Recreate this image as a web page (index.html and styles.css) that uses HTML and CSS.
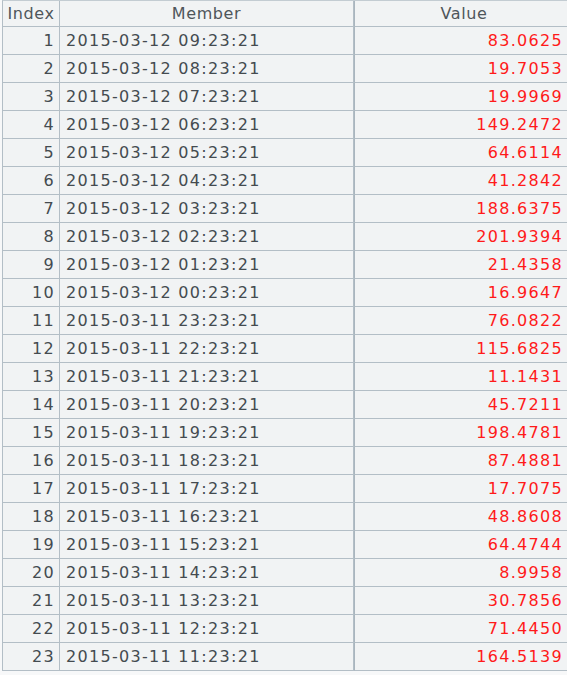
FILE: index.html
```html
<!DOCTYPE html>
<html>
<head>
<meta charset="utf-8">
<link rel="stylesheet" href="styles.css">
</head>
<body>
<div class="grid">
  <div class="cell head">Index</div>
  <div class="cell head">Member</div>
  <div class="cell head val-head">Value</div>

  <div class="cell idx">1</div><div class="cell mem">2015-03-12 09:23:21</div><div class="cell val">83.0625</div>
  <div class="cell idx">2</div><div class="cell mem">2015-03-12 08:23:21</div><div class="cell val">19.7053</div>
  <div class="cell idx">3</div><div class="cell mem">2015-03-12 07:23:21</div><div class="cell val">19.9969</div>
  <div class="cell idx">4</div><div class="cell mem">2015-03-12 06:23:21</div><div class="cell val">149.2472</div>
  <div class="cell idx">5</div><div class="cell mem">2015-03-12 05:23:21</div><div class="cell val">64.6114</div>
  <div class="cell idx">6</div><div class="cell mem">2015-03-12 04:23:21</div><div class="cell val">41.2842</div>
  <div class="cell idx">7</div><div class="cell mem">2015-03-12 03:23:21</div><div class="cell val">188.6375</div>
  <div class="cell idx">8</div><div class="cell mem">2015-03-12 02:23:21</div><div class="cell val">201.9394</div>
  <div class="cell idx">9</div><div class="cell mem">2015-03-12 01:23:21</div><div class="cell val">21.4358</div>
  <div class="cell idx">10</div><div class="cell mem">2015-03-12 00:23:21</div><div class="cell val">16.9647</div>
  <div class="cell idx">11</div><div class="cell mem">2015-03-11 23:23:21</div><div class="cell val">76.0822</div>
  <div class="cell idx">12</div><div class="cell mem">2015-03-11 22:23:21</div><div class="cell val">115.6825</div>
  <div class="cell idx">13</div><div class="cell mem">2015-03-11 21:23:21</div><div class="cell val">11.1431</div>
  <div class="cell idx">14</div><div class="cell mem">2015-03-11 20:23:21</div><div class="cell val">45.7211</div>
  <div class="cell idx">15</div><div class="cell mem">2015-03-11 19:23:21</div><div class="cell val">198.4781</div>
  <div class="cell idx">16</div><div class="cell mem">2015-03-11 18:23:21</div><div class="cell val">87.4881</div>
  <div class="cell idx">17</div><div class="cell mem">2015-03-11 17:23:21</div><div class="cell val">17.7075</div>
  <div class="cell idx">18</div><div class="cell mem">2015-03-11 16:23:21</div><div class="cell val">48.8608</div>
  <div class="cell idx">19</div><div class="cell mem">2015-03-11 15:23:21</div><div class="cell val">64.4744</div>
  <div class="cell idx">20</div><div class="cell mem">2015-03-11 14:23:21</div><div class="cell val">8.9958</div>
  <div class="cell idx">21</div><div class="cell mem">2015-03-11 13:23:21</div><div class="cell val">30.7856</div>
  <div class="cell idx">22</div><div class="cell mem">2015-03-11 12:23:21</div><div class="cell val">71.4450</div>
  <div class="cell idx">23</div><div class="cell mem">2015-03-11 11:23:21</div><div class="cell val">164.5139</div>
</div>
</body>
</html>
```
FILE: styles.css
```css
html, body {
  margin: 0;
  padding: 0;
  background: #f7f8f9;
  overflow: hidden;
}
.grid {
  margin-left: 2px;
  display: grid;
  grid-template-columns: 57px 294px 220px;
  grid-auto-rows: 28px;
  grid-template-rows: 26px;
  border-top: 1px solid #c3ccd2;
  border-left: 1px solid #b3bec6;
  width: 571px;
  font-family: "DejaVu Sans", sans-serif;
  font-size: 16px;
  letter-spacing: 1.3px;
  color: #444b50;
}
.cell {
  box-sizing: border-box;
  background: #f1f3f4;
  border-right: 1px solid #b3bec6;
  border-bottom: 1px solid #b3bec6;
  display: flex;
  align-items: center;
  white-space: nowrap;
  overflow: hidden;
}
.head {
  justify-content: center;
  color: #4f565b;
  letter-spacing: 0.6px;
  padding-bottom: 1px;
}
.val-head, .val {
  border-left: 1px solid #a9b5be;
}
.idx {
  justify-content: flex-end;
  padding-right: 4px;
}
.mem {
  padding-left: 6px;
}
.val {
  justify-content: flex-end;
  padding-right: 10px;
  color: #ff1a1a;
}
```
